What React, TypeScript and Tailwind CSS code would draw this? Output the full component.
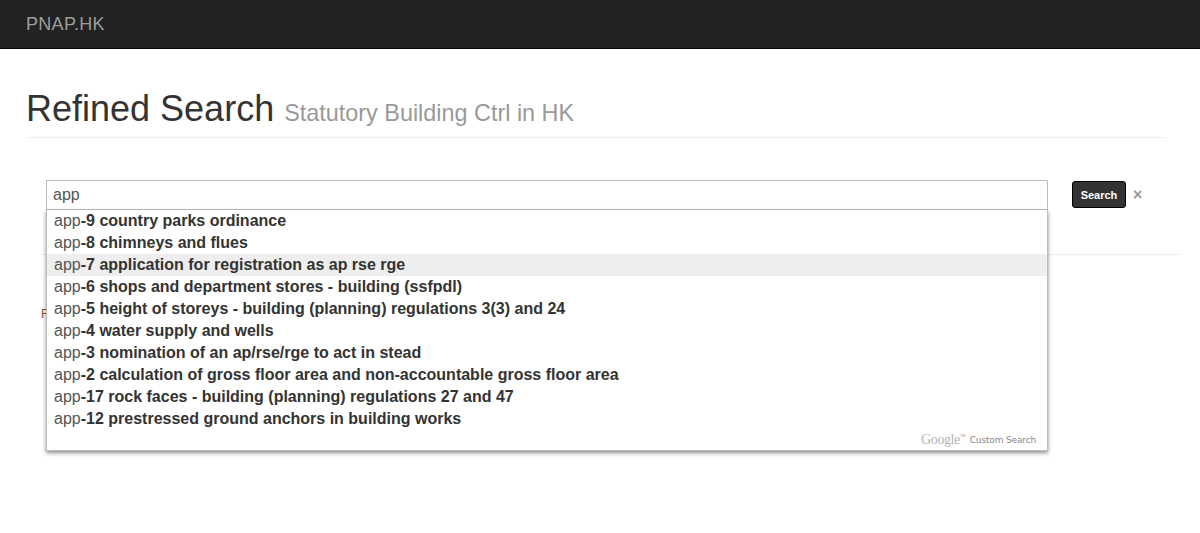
// App.tsx
const suggestions = [
  "-9 country parks ordinance",
  "-8 chimneys and flues",
  "-7 application for registration as ap rse rge",
  "-6 shops and department stores - building (ssfpdl)",
  "-5 height of storeys - building (planning) regulations 3(3) and 24",
  "-4 water supply and wells",
  "-3 nomination of an ap/rse/rge to act in stead",
  "-2 calculation of gross floor area and non-accountable gross floor area",
  "-17 rock faces - building (planning) regulations 27 and 47",
  "-12 prestressed ground anchors in building works",
];

function SuggestionList() {
  return (
    <div className="absolute left-0 top-[30px] z-10 w-[1002px] border border-t-0 border-[#bdbdbd] bg-white shadow-[0_2px_4px_rgba(0,0,0,0.45)]">
      {suggestions.map((item, index) => (
        <div
          key={item}
          className={`h-[22px] truncate pl-[7px] text-[16px] leading-[21px] text-[#555] ${
            index === 2 ? "bg-[#eeeeee]" : ""
          }`}
        >
          app<b className="font-bold text-[#333]">{item}</b>
        </div>
      ))}
      <div className="flex h-[20px] items-start justify-end pr-[11px]">
        <span className="font-['Liberation_Serif',serif] text-[14px] leading-[20px] tracking-[-0.4px] text-[#b5b5b5]">
          Google
        </span>
        <span className="mt-[3px] mr-[4px] text-[4px] leading-[6px] text-[#999]">TM</span>
        <span className="font-['DejaVu_Sans',sans-serif] text-[9px] leading-[20px] tracking-[-0.15px] text-[#888]">
          Custom Search
        </span>
      </div>
    </div>
  );
}

export default function App() {
  return (
    <div className="min-h-[533px] bg-white font-['Liberation_Sans',Arial,sans-serif] text-[#333]">
      {/* navbar */}
      <nav className="h-[49px] border-b border-[#080808] bg-[#222222] pl-[26px] text-[18px] leading-[48px] tracking-[0.3px] text-[#9d9d9d]">
        PNAP.HK
      </nav>

      <div className="ml-[26px] w-[1140px]">
        <div className="mt-[40px] border-b border-[#eeeeee] pb-[9px]">
          <h1 className="text-[36px] leading-[39px] font-normal">
            Refined Search{" "}
            <small className="text-[23.4px] leading-none font-normal text-[#999999]">
              Statutory Building Ctrl in HK
            </small>
          </h1>
        </div>

        {/* search box */}
        <div className="mt-[42px] ml-[20px] flex items-start">
          <div className="relative w-[1002px]">
            <div className="h-[30px] border border-[#bdbdbd] pl-[6px] text-[16px] leading-[27px] text-[#555]">
              app
            </div>
            <SuggestionList />
          </div>
          <button className="mt-[1px] ml-[24px] h-[27px] w-[54px] rounded-[3px] border border-black bg-[#333333] text-center text-[11px] leading-[24px] font-bold text-white">
            Search
          </button>
          <span className="mt-[2px] ml-[7px] text-[16px] leading-[26px] font-bold text-[#999]">×</span>
        </div>

        <div className="mt-[44px] ml-[15px] w-[1140px] border-b border-[#eeeeee]" />
        <p className="mt-[51px] ml-[15px] text-[12px] leading-[16px] text-[#8a4b1f]">F</p>
      </div>
    </div>
  );
}
